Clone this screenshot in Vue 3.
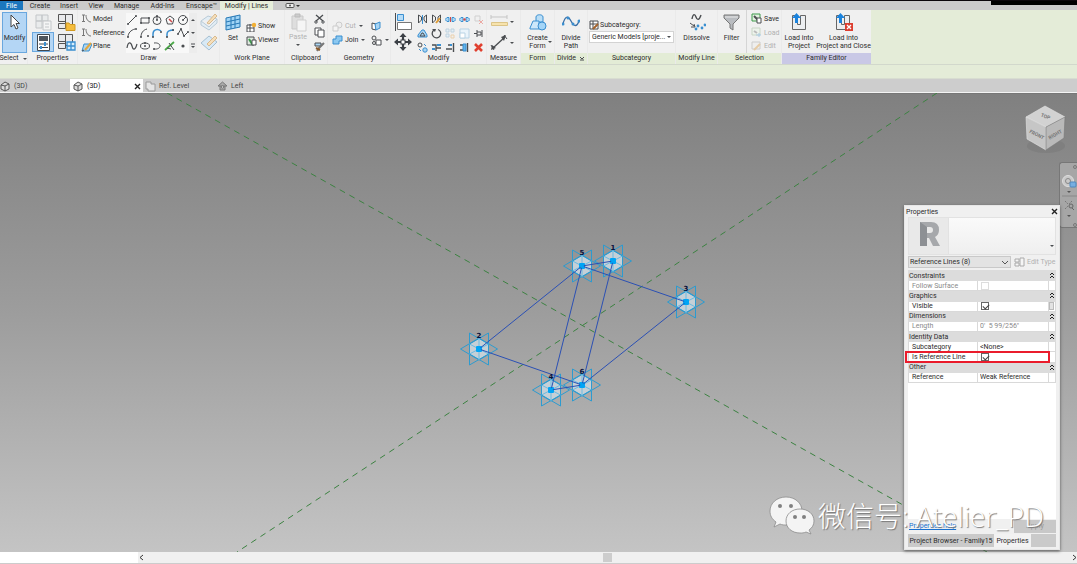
<script setup>
import { h } from 'vue'

const K = '#4a4d50'
const B = '#3a8fd0'
const L = '#a9d5f3'
const line = (d, s = K, w = 1, f = 'none') =>
  `<path d="${d}" stroke="${s}" stroke-width="${w}" fill="${f}"/>`
const dot = (x, y, r, f = K) => `<circle cx="${x}" cy="${y}" r="${r}" fill="${f}"/>`
const ring = (x, y, r, s = K, f = 'none') =>
  `<circle cx="${x}" cy="${y}" r="${r}" fill="${f}" stroke="${s}"/>`

const icons = {
  cursor: line('M5 2V14L8 11.5L10 16L12 15L10 10.5H13.5Z', '#444', 1, '#fff'),
  typeprops: line('M2 2H8V8H2ZM8 2H14V8H8ZM2 8H8V15H2Z', '#c3c6c9', 1, '#e9ebec') + line('M9 8H17V17H9Z', '#c3c6c9', 1, '#f4f5f5') + line('M11 11H15M11 14H15', '#c3c6c9'),
  props: line('M3.500 1.500H15.500V17.500H3.500Z', '#42484f', 1, '#fff') + line('M5 3H14V8H5Z', 'none', 0, '#4d545c') + line('M5 11H14M5 14.500H14', '#42484f') + line('M11 9V13M7 13V16', B, 2),
  famcat: line('M1.500 1.500H8.500V8.500H1.500ZM8.500 1.500H15.500V12.500H8.500ZM1.500 10.500H8.500V15.500H1.500Z', '#555', 1, '#e9eaec') + line('M9 10H12L13 11.500H18V17.500H9Z', '#d19a22', 1, '#f5bd3d'),
  famtypes: line('M1.500 1.500H8.500V8.500H1.500ZM8.500 1.500H15.500V12.500H8.500ZM1.500 10.500H8.500V15.500H1.500Z', '#555', 1, '#e9eaec') + line('M10 9H18V17H10ZM14 9V17M10 13H18', B, 1.3, '#d7edfb'),
  model: line('M1 2H4M2.500 2V8M1 8.500H4', '#777') + line('M5 2C5 6 7 9 10 9', '#777'),
  plane: line('M3 3H11L8 10H1Z', B, 1, L) + line('M4 9L10 2', '#e3a73d', 2) + line('M1 10L3 9', K),
  ln: line('M2 10L10 2') + dot(2, 10, 1) + dot(10, 2, 1),
  rect: line('M2 4H10V9H2Z') + dot(2, 9, 1) + dot(10, 4, 1),
  poly1: ring(6, 6.5, 4) + line('M6 2V6', K) + dot(6, 6, 1) + dot(6, 2, 1),
  poly2: line('M6 2L10 5L8.5 10H3.5L2 5Z') + line('M5 5L8 8', '#d04848', 1.5),
  circle: ring(6, 6, 4.5) + line('M6 6L9 3') + dot(6, 6, 1),
  arc1: line('M2 10C2 6 5 3 9 2') + dot(2, 10, 1) + dot(10, 2, 1),
  arc2: line('M2 10C2 6 4 3 8 2') + dot(2, 10, 1) + dot(9, 9, 1),
  arc3: line('M2 10V7C2 3 6 1 10 4', B, 1.5) + dot(2, 10, 1) + dot(10, 5, 1),
  arc4: line('M3 10V7C3 4 6 3 10 3', B, 1.5) + dot(3, 10, 1) + dot(9, 3, 1),
  spline: line('M1 7L4 2L7 9L11 5') + dot(1, 7, 1) + dot(4, 2, 1) + dot(7, 9, 1) + dot(11, 5, 1),
  wave: line('M1 8C2 1 5 2 6 6S9 11 11 4', K, 1.2),
  ellipse: '<ellipse cx="6" cy="6" rx="4.5" ry="3" fill="none" stroke="#4a4d50"/>' + dot(6, 6, 1) + dot(6, 3, 1),
  halfell: line('M3 3C11 2 11 10 3 9') + dot(3, 9, 1),
  pick: line('M1 10L10 2', '#4bab48', 1.8) + line('M5 3L10 10M3 8L7 9', K),
  point: dot(6, 6, 1.6),
  up: line('M1 4L3 2L5 4Z', 'none', 0, K),
  down: line('M1 2H5L3 4Z', 'none', 0, K),
  more: line('M1 1H5', K) + line('M1 3H5L3 5Z', 'none', 0, K),
  face: line('M1 9L8 4L17 7L9 15ZM1 9V13L9 18L17 11V7', '#b9cbd8', 1, '#e3edf4') + line('M7 11L15 2L17 4L9 12Z', '#d9b98c', 1, '#f5dfbb'),
  wplane: line('M1 10L9 3L17 9L9 17Z', '#a5bfd2', 1, '#d8e9f5') + line('M7 11L15 3L17 5L9 13Z', '#d9b98c', 1, '#f5dfbb'),
  set: line('M2 5L16 2V14L2 17ZM7 4V16M11 3V15M2 9L16 6M2 13L16 10', '#2778b5', 1, '#9fd3f5'),
  show: line('M1 4H8V11H1ZM4 3V11M1 7H8', K, 1, '#fff') + dot(8, 4, 2.2, '#f2b035'),
  viewer: line('M1 2H8V10H1Z', K, 1, '#dfe9df') + line('M3 4L6 9L9 6', '#3f9a4d', 2) + line('M6 5H10V10H6Z', K, 1, '#fff'),
  paste: line('M3 3H14V16H3Z', '#c9c9c9', 1, '#dedede') + line('M6 1H11V4H6Z', '#bbb', 1, '#ccc') + line('M8 7H17V18H8Z', '#cfcfcf', 1, '#f5f5f5'),
  cut: line('M2 2L9 8M9 2L2 8', K, 1.3) + ring(2, 9, 1.2) + ring(9, 9, 1.2),
  copy: line('M1 1H7V8H1Z', K, 1, '#fff') + line('M4 3H10V10H4Z', K, 1, '#fff'),
  match: line('M1 2H7V5H1Z', K, 1, L) + line('M10 2L5 7L3 10', '#777', 2) + line('M2 7L6 9', '#8a5a2b', 2),
  gcut: ring(7, 4, 3, '#ccc', '#eee') + line('M1 5H6V10H1Z', '#ccc', 1, '#f4f4f4'),
  gjoin: line('M4 1H10V6H7V9H1V4H4Z', B, 1, '#8cc8f0'),
  gface: line('M1 2L5 3V9L1 8Z', K, 1, '#fff') + line('M4 3L9 1V7L5 9Z', B, 1, L),
  gdem: ring(3, 3, 2) + line('M5 5H10V10H5Z', K, 1, '#fff') + ring(3, 8, 1.5),
  align: line('M1.5 1V19', K) + line('M3.500 2.500H9.500V8.500H3.500Z', B, 1, '#b6dcf7') + line('M3.500 10.500H17.500V17.500H3.500Z', '#777', 1, '#fff'),
  move: line('M9 3V15M3 9H15', '#3b3f45', 2.2) + line('M9 0L12.500 4H5.500ZM9 18L12.500 14H5.500ZM0 9L4 5.500V12.500ZM18 9L14 5.500V12.500Z', 'none', 0, '#3b3f45') + '<rect x="7" y="7" width="4" height="4" fill="#fff" stroke="#3b3f45"/>',
  mirror1: line('M1.500 1V9L4.500 6V3ZM9.500 1V9L7 6V3Z', K, 1) + line('M5.5 1V10', B),
  mirror2: line('M1.500 1V9L4.500 6V3ZM9.500 1V9L7 6V3Z', K, 1) + line('M5 9L9 4', '#df9d37', 2),
  split1: line('M0 5.500L2 3.500H4V7.500H2ZM7 3.500H9L11 5.500L9 7.500H7Z', B, 1, L) + line('M5.5 3V8', '#d04848'),
  split2: line('M0 5.500L2 3.500H4V7.500H2ZM7 3.500H9L11 5.500L9 7.500H7Z', B, 1, L) + dot(5.5, 5.5, 1.2, '#d04848'),
  unpin: line('M2 2H7V7H2Z', '#d0d0d0') + line('M6 6L10 10M10 6L6 10', '#eba9a3'),
  offset: line('M1 9V7L5 2H7L10 7V9Z', B, 1, L) + line('M3 8L5 5H6L8 8Z', K),
  rotate: line('M3 2A4.300 4.300 0 1 0 7 1.500', K, 1.3) + line('M1 1L5 1L4 4Z', 'none', 0, K),
  array: line('M1 1H4V4H1ZM6 1H9V4H6ZM1 6H4V9H1Z', '#bfd2df', 1, '#e5eff5') + line('M6 7H9V10H6Z', '#ead0ac'),
  scale: line('M1 1H10V10H1Z', '#b9d3e4', 1, '#eaf4fb') + line('M1 5H6V10H1Z', '#b9d3e4', 1, '#fff'),
  pin: line('M1 5.500H4M4 2V9M4 4H8V7H4M9 2V9', K),
  trim0: ring(3, 3, 2) + ring(8, 8, 2.2, B, L) + line('M7 2L9 4M2 7L4 9', B),
  trim1: line('M1 3H5V9M5 6H10', K, 1.3) + line('M6 3H10M1 7H4', B, 2),
  trim2: line('M1 7H7M3 3H7M8.500 1V10', K, 1.4) + line('M5 3H7', B, 2),
  trim3: line('M1 3H6M1 8H6M8.500 1V10', K, 1.4) + line('M4 2H7V9H4Z', B, 1, '#5fb2ea'),
  del: line('M2 2L9 9M9 2L2 9', '#e0402f', 2.6),
  ruler: line('M1 5H17M1 3V7M17 3V7', '#c5c5c5') + line('M1.500 10.500H17.500V13.500H1.500Z', '#dcc487', 1, '#f7e3ad'),
  dim: line('M3 15L15 4', K, 1.3) + line('M1 12L4 17M14 2L17 6', K) + line('M1 17L2 12L6 15ZM16 2L11 4L14 8Z', 'none', 0, K),
  form: line('M7 4C7 1 14 1 14 4V9H7Z', B, 1, '#b9def7') + line('M1 15L4 8H10V16H1Z', B, 1, '#cde8fa') + ring(13, 13, 4, B, '#a4d5f7'),
  dpath: line('M1 11C3 3 6 2 9 8S15 14 17 8', '#3a6ea5', 1.3) + dot(1, 11, 1.5, B) + dot(6, 5, 1.5, B) + dot(11, 11, 1.5, B) + dot(17, 8, 1.5, B),
  subcat: line('M1 1H9V9H1ZM4 1V9M1 4H9', K, 1, '#fff') + line('M4 9L9 4', '#a3632c', 2),
  dissolve: line('M4 6C5 0 7 1 8 4S11 8 13 2', K, 1.4) + line('M2 10L6 13M3 14L7 14L6 11', K) + [[8, 16], [10, 13], [14, 15], [17, 12]].map((p) => dot(p[0], p[1], 1.4, B)).join(''),
  filter: line('M1 2H16V5L10 11V17L7 15V11L1 5Z', '#777', 1, '#b9bcc0') + line('M2 4H15', '#e8e8e8'),
  save: line('M1 1H9V8H1Z', '#3f9a4d', 1, '#e3f2e0') + line('M3 3L7 7', K, 2) + line('M6 5H10V10H6Z', K, 1, '#fff'),
  load: line('M1 1H9V8H1Z', '#c9d6c6', 1, '#edf3ec') + line('M3 4L6 6', '#bbb', 2) + line('M5 8H10M8 6V10', '#aacbe4'),
  edit: line('M1 1H9V8H1Z', '#ccc', 1, '#eee') + line('M3 9L9 3', '#e6cba6', 2),
  loadp: line('M2.500 2.500H7.500V11.500H10.500V2.500H15.500V16.500H2.500Z', '#666', 1, '#eceef0') + line('M6.500 10V4', '#1b83dd', 3) + line('M6.500 0L11 5H2Z', 'none', 0, '#1b83dd'),
  loadc: line('M2.500 2.500H7.500V11.500H10.500V2.500H15.500V16.500H2.500Z', '#666', 1, '#eceef0') + line('M6.500 10V4', '#1b83dd', 3) + line('M6.500 0L11 5H2Z', 'none', 0, '#1b83dd') + '<rect x="11" y="10" width="8" height="8" fill="#dc3f30"/>' + line('M13 12L17 16M17 12L13 16', '#fff', 1.3),
  house: line('M1 4L5 1L9 3V8L5 10L1 8ZM1 4L5 5L9 3M5 5V10', '#555', 1, '#ddd'),
  plan: line('M1 1H6V3H10V10H3V8H1Z', '#9a9a9a', 1, '#e5e5e5'),
  elev: line('M1 5L5.500 1L10 5ZM3 5V9H8V5', '#777', 1, '#aaa') + ring(5.500, 6, 1.2, '#777', '#ddd'),
  close: line('M1 1L6 6M6 1L1 6', '#222', 1.4),
  etype: line('M1 2H5V5H1ZM6 1H10V9H6ZM1 6H5V9H1Z', '#aaa', 1, '#f5f5f5'),
  chev: line('M1 1L4 4L7 1', '#555'),
  dbl: line('M1 3L3 1L5 3M1 6L3 4L5 6', '#222'),
  pop: line('M1 1L3 3L5 1M1 4H5', K)
}
const Ico = ({ n, w = 11, hh }) =>
  h('svg', {
    width: w, height: hh || w, viewBox: `0 0 ${w} ${hh || w}`, 'aria-hidden': 'true',
    style: { display: 'block', flexShrink: 0 }, innerHTML: icons[n]
  })
Ico.props = ['n', 'w', 'hh']

const menu = ['Create', 'Insert', 'View', 'Manage', 'Add-Ins', 'Enscape™']
const drawTools = ['ln', 'rect', 'poly1', 'poly2', 'circle', 'arc1', 'arc2', 'arc3', 'arc4', 'spline', 'wave', 'ellipse', 'halfell', 'pick', 'point']
const modTools = ['mirror1', 'mirror2', 'split1', 'split2', 'unpin', 'offset', 'rotate', 'array', 'scale', 'pin', 'trim0', 'trim1', 'trim2', 'trim3', 'del']
const nodes = [[613, 261, 1], [479, 349, 2], [686, 302, 3], [551, 390, 4], [582, 266, 5], [582, 385, 6]]
const edges = [[5, 2], [5, 3], [5, 4], [5, 1], [1, 6], [3, 6], [2, 6], [4, 6]]
const at = (i) => nodes[i - 1]
const rows = [
  { head: 'Constraints' }, { label: 'Follow Surface', check: false, dim: true },
  { head: 'Graphics' }, { label: 'Visible', check: true, btn: true },
  { head: 'Dimensions' }, { label: 'Length', value: '0\'  5 99/256"', dim: true },
  { head: 'Identity Data' }, { label: 'Subcategory', value: '<None>' },
  { label: 'Is Reference Line', check: true, mark: true },
  { head: 'Other' }, { label: 'Reference', value: 'Weak Reference' }
]
</script>

<template>
  <div class="app">
    <nav class="menubar">
      <button class="file">File</button>
      <button v-for="m in menu" :key="m" :class="'m-' + m.slice(0, 3).toLowerCase()">{{ m }}</button>
      <button class="current">Modify | Lines</button>
      <button class="cycle" aria-label="Minimize ribbon">
        <svg width="16" height="7" viewBox="0 0 16 7"><rect x="1" y="1.500" width="8" height="4" rx="1" fill="#eee" stroke="#555" /><circle cx="5" cy="3.500" r="1" fill="#555" /><path d="M11 3H15L13 5Z" fill="#333" /></svg>
      </button>
      <span class="black"></span>
    </nav>

    <div class="ribbon">
      <section class="panel p-select">
        <div class="body"><button class="big on"><Ico n="cursor" :w="18" :hh="19" />Modify</button></div>
        <h2>Select <Ico n="down" :w="6" /></h2>
      </section>
      <section class="panel p-props">
        <div class="body quad">
          <button aria-label="Type properties"><Ico n="typeprops" :w="19" /></button>
          <button aria-label="Family category"><Ico n="famcat" :w="19" /></button>
          <button aria-label="Properties" class="on"><Ico n="props" :w="19" /></button>
          <button aria-label="Family types"><Ico n="famtypes" :w="19" /></button>
        </div>
        <h2>Properties</h2>
      </section>
      <section class="panel p-draw">
        <div class="body">
          <div class="stack names">
            <button><Ico n="model" />Model</button>
            <button><Ico n="model" />Reference</button>
            <button><Ico n="plane" />Plane</button>
          </div>
          <div class="gallery">
            <div class="tools"><button v-for="t in drawTools" :key="t" :aria-label="t"><Ico :n="t" :w="12" /></button></div>
            <div class="scroller">
              <button aria-label="Up"><Ico n="up" :w="6" /></button>
              <button aria-label="Down"><Ico n="down" :w="6" /></button>
              <button aria-label="More"><Ico n="more" :w="6" /></button>
            </div>
          </div>
          <div class="pair">
            <button aria-label="Draw on face"><Ico n="face" :w="19" /></button>
            <button aria-label="Draw on work plane"><Ico n="wplane" :w="19" /></button>
          </div>
        </div>
        <h2>Draw</h2>
      </section>
      <section class="panel p-work">
        <div class="body">
          <button class="big"><Ico n="set" :w="18" :hh="19" />Set</button>
          <div class="stack two"><button><Ico n="show" />Show</button><button><Ico n="viewer" />Viewer</button></div>
        </div>
        <h2>Work Plane</h2>
      </section>
      <section class="panel p-clip">
        <div class="body">
          <button class="big off"><Ico n="paste" :w="18" :hh="19" />Paste<Ico n="down" :w="6" /></button>
          <div class="stack">
            <button aria-label="Cut"><Ico n="cut" /></button>
            <button aria-label="Copy"><Ico n="copy" /></button>
            <button aria-label="Match"><Ico n="match" /></button>
          </div>
        </div>
        <h2>Clipboard</h2>
      </section>
      <section class="panel p-geo">
        <div class="body">
          <div class="stack two joins"><button class="off"><Ico n="gcut" />Cut<Ico n="down" :w="6" /></button><button><Ico n="gjoin" />Join<Ico n="down" :w="6" /></button></div>
          <div class="stack two"><button aria-label="Split face"><Ico n="gface" /></button><button aria-label="Demolish"><Ico n="gdem" /><Ico n="down" :w="6" /></button></div>
        </div>
        <h2>Geometry</h2>
      </section>
      <section class="panel p-mod">
        <div class="body">
          <div class="pair"><button aria-label="Align"><Ico n="align" :w="19" /></button><button aria-label="Move"><Ico n="move" :w="19" /></button></div>
          <div class="tools"><button v-for="t in modTools" :key="t" :aria-label="t"><Ico :n="t" /></button></div>
        </div>
        <h2>Modify</h2>
      </section>
      <section class="panel p-meas">
        <div class="body">
          <div class="pair">
            <button aria-label="Measure"><Ico n="ruler" :w="19" /><Ico n="down" :w="6" /></button>
            <button aria-label="Dimension"><Ico n="dim" :w="19" /><Ico n="down" :w="6" /></button>
          </div>
        </div>
        <h2>Measure</h2>
      </section>
      <section class="panel ctx p-form">
        <div class="body"><button class="big"><Ico n="form" :w="18" :hh="19" /><span>Create<br />Form</span></button><Ico class="corner" n="down" :w="6" /></div>
        <h2>Form</h2>
      </section>
      <section class="panel ctx p-div">
        <div class="body"><button class="big"><Ico n="dpath" :w="18" :hh="19" /><span>Divide<br />Path</span></button></div>
        <h2>Divide <Ico n="pop" :w="6" /></h2>
      </section>
      <section class="panel ctx p-sub">
        <div class="body">
          <label for="subcat"><Ico n="subcat" />Subcategory:</label>
          <div class="drop"><select id="subcat"><option>Generic Models [proje...</option></select><Ico n="down" :w="6" /></div>
        </div>
        <h2>Subcategory</h2>
      </section>
      <section class="panel ctx p-line">
        <div class="body"><button class="big"><Ico n="dissolve" :w="18" :hh="19" />Dissolve</button></div>
        <h2>Modify Line</h2>
      </section>
      <section class="panel ctx p-sel">
        <div class="body">
          <button class="big"><Ico n="filter" :w="18" :hh="19" />Filter</button>
          <div class="stack ruled"><button><Ico n="save" />Save</button><button class="off"><Ico n="load" />Load</button><button class="off"><Ico n="edit" />Edit</button></div>
        </div>
        <h2>Selection</h2>
      </section>
      <section class="panel ctx p-fam">
        <div class="body">
          <button class="big"><Ico n="loadp" :w="18" :hh="19" /><span>Load into<br />Project</span></button>
          <button class="big"><Ico n="loadc" :w="19" /><span>Load into<br />Project and Close</span></button>
        </div>
        <h2>Family Editor</h2>
      </section>
    </div>
    <div class="options"></div>

    <div class="views">
      <button class="v1"><Ico n="house" />(3D)</button>
      <button class="v2"><Ico n="house" />(3D)<Ico class="x" n="close" :w="7" /></button>
      <button class="v3"><Ico n="plan" />Ref. Level</button>
      <button class="v4"><Ico n="elev" />Left</button>
    </div>

    <main class="canvas">
      <svg class="scene" viewBox="0 93 1077 459" preserveAspectRatio="xMidYMid slice">
        <g stroke="#3c8241" stroke-width="1" stroke-dasharray="6 5" fill="none">
          <path d="M167 93L987 552" />
          <path d="M937 93L237 552" />
        </g>
        <g v-for="n in nodes" :key="n[2]" :transform="`translate(${n[0]} ${n[1]})`" stroke="#2c9bd0" fill="none">
          <path d="M0 -11L9.500 -5V5L0 11L-9.500 5V-5Z" fill="#c5d0d7" stroke="none" />
          <path d="M-9.500 -16L9.500 -5V16L-9.500 5ZM9.500 -16L-9.500 -5V16L9.500 5ZM-18.500 0L0 -11L18.500 0L0 11Z" />
          <path d="M0 -11V11M-9.500 -5L9.500 5M-9.500 5L9.500 -5" stroke="#6bbbe2" />
          <rect x="-3" y="-3" width="6" height="6" rx="1" fill="#00a5f5" stroke="none" />
        </g>
        <path v-for="e in edges" :key="e.join()" :d="`M${at(e[0])[0]} ${at(e[0])[1]}L${at(e[1])[0]} ${at(e[1])[1]}`" stroke="#2b50b4" stroke-width="1" />
        <circle v-for="n in nodes" :key="'c' + n[2]" :cx="n[0]" :cy="n[1]" r="2" fill="#00a5f5" />
        <text v-for="n in nodes" :key="'t' + n[2]" :x="n[0]" :y="n[1] - 11" class="num">{{ n[2] }}</text>
      </svg>

      <svg class="cube" width="52" height="56" viewBox="1020 102 52 56">
        <ellipse cx="1046" cy="146" rx="19" ry="7" fill="#777" opacity=".5" />
        <path d="M1026 117L1045 106L1065 117L1046 127Z" fill="#d2d2d2" stroke="#e4e4e4" stroke-width=".6" />
        <path d="M1026 117L1046 127V150L1027 139Z" fill="#c6c6c6" stroke="#e4e4e4" stroke-width=".6" />
        <path d="M1046 127L1065 117L1064 138L1046 150Z" fill="#b9b9b9" stroke="#777" stroke-width=".6" />
        <text transform="translate(1045 118) rotate(20)">TOP</text>
        <text transform="translate(1036 136) rotate(27)">FRONT</text>
        <text transform="translate(1056 136) rotate(-30)">RIGHT</text>
      </svg>

      <div class="navbar">
        <svg width="18" height="66" viewBox="0 0 18 66" fill="none">
          <circle cx="15" cy="4" r="1.500" stroke="#777" />
          <circle cx="8" cy="18" r="5.500" fill="#c9c9c9" stroke="#ddd" /><circle cx="8" cy="18" r="2.500" stroke="#888" />
          <rect x="10" y="19" width="6" height="5" rx="1" fill="#76aee0" stroke="#4d87bd" />
          <path d="M7 28H11L9 30Z" fill="#555" /><path d="M2 33H18" stroke="#888" />
          <path d="M5 38L8 41M12 38L9 41M5 46L8 43" stroke="#777" stroke-dasharray="2 1" /><circle cx="11" cy="43" r="2" stroke="#666" /><path d="M12 45L14 47" stroke="#666" />
          <path d="M7 52H11L9 54Z" fill="#555" /><circle cx="15" cy="62" r="1.500" stroke="#777" />
        </svg>
      </div>

      <aside class="palette">
        <header>Properties<button aria-label="Close"><Ico n="close" :w="7" /></button></header>
        <div class="preview">
          <div class="logo"><svg width="36" height="36" viewBox="0 0 36 36"><path d="M9 4H20Q28 4 28 12Q28 17 24 19L29 28H22L18 20H16V28H9ZM16 9V15H19Q22 15 22 12T19 9Z" fill="#a6a8ab" fill-rule="evenodd" /><path d="M9 4L16 9V28H9Z" fill="#8d9094" /></svg></div>
          <Ico n="down" :w="6" />
        </div>
        <div class="selector">
          <div class="drop"><select aria-label="Type"><option>Reference Lines (8)</option></select><Ico n="chev" :w="8" :hh="5" /></div>
          <button class="off"><Ico n="etype" />Edit Type</button>
        </div>
        <div class="sheet">
          <table>
            <colgroup><col /><col class="c2" /><col class="c3" /></colgroup>
            <tbody>
              <tr v-for="(r, i) in rows" :key="i" :class="{ head: r.head, dim: r.dim, mark: r.mark }">
                <template v-if="r.head"><th colspan="2">{{ r.head }}</th><td class="fold"><Ico n="dbl" :w="6" :hh="7" /></td></template>
                <template v-else>
                  <td><label :for="'f' + i">{{ r.label }}</label></td>
                  <td><input v-if="r.value" :id="'f' + i" type="text" :value="r.value" /><input v-else :id="'f' + i" type="checkbox" :checked="r.check" :disabled="r.dim" /></td>
                  <td><button v-if="r.btn" aria-label="Associate parameter"></button></td>
                </template>
              </tr>
            </tbody>
          </table>
        </div>
        <div class="foot"><a href="#help">Properties help</a><button>Apply</button></div>
        <div class="tabs"><button>Project Browser - Family15</button><button class="sel">Properties</button><span></span></div>
      </aside>

      <div class="watermark">
        <svg width="46" height="40" viewBox="0 0 46 40">
          <g fill="#f4f4f4" stroke="#8b8b8b" stroke-width=".8">
            <path d="M17 1C8 1 1 7 1 15C1 20 3 23 7 26L5 31L11 28C13 29 15 29 18 29C27 29 33 22 33 15C33 7 26 1 17 1Z" />
            <path d="M31 13C23 13 17 18 17 25C17 32 23 37 31 37C33 37 35 37 37 36L42 38L40 34C43 32 45 29 45 25C45 18 39 13 31 13Z" />
          </g>
          <g fill="#808080"><circle cx="11" cy="10" r="2" /><circle cx="22" cy="10" r="2" /><circle cx="26" cy="21" r="2" /><circle cx="35" cy="21" r="2" /></g>
        </svg>
        <span>微信号: Atelier_PD</span>
      </div>
    </main>

    <footer class="hbar">
      <div class="status"></div>
      <div class="track"><button aria-label="Scroll left"><svg width="5" height="7" viewBox="0 0 5 7"><path d="M4 1L1 3.500L4 6" stroke="#333" fill="none" /></svg></button><span class="thumb"></span><button aria-label="Scroll right"><svg width="5" height="7" viewBox="0 0 5 7"><path d="M1 1L4 3.500L1 6" stroke="#333" fill="none" /></svg></button></div>
    </footer>
  </div>
</template>

<style>
body { overflow: hidden; }
</style>
<style scoped>
* { box-sizing: border-box; }
.app { min-height: 100vh; display: flex; flex-direction: column; font: 7px/8px Roboto, "Open Sans", sans-serif; color: #2c2c2c; background: #cdcdcd; overflow: hidden; }
button, select, input { font: inherit; color: inherit; background: none; border: 0; padding: 0; margin: 0; border-radius: 0; white-space: nowrap; }
button { display: flex; align-items: center; justify-content: center; }
.off { color: #b0b0b0; }

.menubar { display: flex; height: 10px; background: #cbcbcb; border-top: 1px solid #0c070c; }
.menubar button { width: 34px; }
.menubar .file { width: 23px; background: #1c77be; color: #fff; }
.menubar .m-ins { width: 24px; }
.menubar .m-vie { width: 30px; }
.menubar .m-man { width: 31px; }
.menubar .m-add { width: 41px; }
.menubar .m-ens { width: 37px; }
.menubar .current { width: 53px; background: #e6eeda; }
.menubar .cycle { width: 40px; }
.black { width: 86px; height: 4px; margin-left: auto; background: #000; }

.ribbon { display: flex; height: 54px; background: #e4ecd8; }
.panel { flex: none; display: flex; flex-direction: column; background: #f0f0f0; border-right: 1px solid #eaeaea; }
.body { flex: 1; min-height: 0; display: flex; }
h2 { flex: none; margin: 0; height: 11px; font: inherit; line-height: 11px; display: flex; align-items: center; justify-content: center; gap: 3px; white-space: nowrap; }
.ctx h2 { background: #e3ecd6; }
.p-fam h2 { background: #c9c8e6; }
.big { flex-direction: column; justify-content: flex-start; height: 41px; padding-top: 3px; gap: 2px; text-align: center; flex: 1; min-width: 0; }
.p-select { width: 28px; }
.p-select .big { margin: 2px 0 0 2px; padding-top: 1px; }
.on { background: #b4d6f5; outline: 1px solid #6aa7de; outline-offset: -1px; }
.p-props { width: 50px; }
.quad { display: grid; grid-template-columns: 22px 22px; grid-template-rows: 20px 20px; padding: 2px 0 0 4px; gap: 0 1px; }
.p-draw { width: 142px; }
.stack { padding-top: 2px; display: flex; flex-direction: column; }
.stack button { height: 14px; justify-content: flex-start; gap: 2px; }
.stack.two { padding-top: 9px; }
.names { width: 48px; padding-left: 3px; }
.names button { gap: 1px; }
.gallery { width: 71px; height: 40px; margin-top: 3px; display: flex; background: #f8f8f8; }
.tools { flex: 1; display: grid; grid-template-columns: repeat(5, 1fr); grid-template-rows: repeat(3, 13px); }
.scroller { width: 8px; display: grid; grid-template-rows: repeat(3, 13px); background: #ececec; }
.pair { display: flex; flex-direction: column; padding: 1px 0 0 3px; }
.pair button { height: 21px; }
.p-work { width: 65px; }
.p-work .big, .p-clip .big { flex: none; width: 26px; }
.p-clip .big { gap: 1px; }
.p-work .stack button { gap: 1px; }
.p-clip { width: 43px; }
.p-clip .stack { padding-left: 3px; }
.p-geo { width: 63px; }
.p-geo .stack { padding-left: 4px; }
.joins { width: 41px; }
.p-mod { width: 96px; }
.p-mod .tools { grid-template-rows: repeat(3, 14px); padding: 2px 0 0 2px; }
.p-meas { width: 34px; }
.p-form { width: 34px; }
.p-form .body { position: relative; }
.corner { position: absolute; right: 1px; bottom: 8px; }
.p-div { width: 33px; }
.p-sub { width: 88px; }
.p-sub .body { flex-direction: column; padding: 9px 1px 0 1px; }
.p-sub label { display: flex; align-items: center; height: 12px; }
.drop { display: flex; align-items: center; position: relative; }
.drop select { appearance: none; width: 100%; height: 12px; padding-left: 2px; background: #fff; border: 1px solid #d3d3d3; }
.drop svg { position: absolute; right: 2px; pointer-events: none; }
.p-line { width: 42px; }
.p-sel { width: 64px; }
.p-sel .big { flex: none; width: 27px; }
.ruled { border-left: 1px solid #d5d5d5; padding-left: 4px; margin-left: 1px; }
.p-fam { width: 89px; border-right: 0; }
.p-fam .big:first-child { flex: none; width: 34px; }
.options { height: 15px; background: #e4ecd8; border-top: 1px solid #d2d8cc; border-bottom: 1px solid #d8ddd1; }

.views { display: flex; height: 14px; background: #cdcdcd; border-bottom: 1px solid #f4f4f4; color: #444; }
.views button { justify-content: flex-start; gap: 3px; padding-top: 1px; }
.v1 { width: 70px; }
.views .v2 { width: 73px; background: #fff; padding: 1px 2px 0 3px; color: #111; }
.v2 .x { margin-left: auto; }
.views .v3 { width: 74px; padding-left: 2px; }

.canvas { flex: 1; min-height: 0; position: relative; border-top: 1px solid #777; background: linear-gradient(#808080, #9d9d9d 48%, #c4c4c4); }
.scene { position: absolute; inset: 0; top: -1px; width: 100%; height: calc(100% + 1px); }
.num { font: bold 7px "DejaVu Sans", sans-serif; fill: #06103c; text-anchor: middle; }
.cube { position: absolute; right: 5px; top: 8px; }
.cube text { font: bold 5px Roboto, sans-serif; fill: #777; text-anchor: middle; }
.navbar { position: absolute; right: 0; top: 68px; width: 18px; height: 66px; background: #a6a6a6; border: 1px solid #777; border-right: 0; border-radius: 3px 0 0 3px; overflow: hidden; }

.palette { position: absolute; right: 17px; top: 111px; bottom: 2px; width: 156px; padding: 0 3px 2px; display: flex; flex-direction: column; background: #f0f0f0; border: 1px solid #e6e6e6; box-shadow: 0 1px 3px #555; }
.palette header { height: 11px; display: flex; align-items: center; justify-content: space-between; margin: 0 -2px; }
.preview { height: 38px; display: flex; align-items: center; justify-content: space-between; border: 1px solid #e2e2e2; background: linear-gradient(#fafafa, #efefef); }
.logo { width: 40px; height: 36px; display: flex; justify-content: center; border-right: 1px solid #e2e2e2; background: #e9e9e9; }
.preview > svg { margin-top: 20px; }
.selector { display: flex; height: 14px; align-items: center; gap: 3px; margin-bottom: 1px; }
.selector .drop { width: 103px; }
.selector select { background: #e3e3e3; border-color: #c9c9c9; padding-left: 1px; }
.selector button { gap: 2px; }
.sheet { flex: 1; background: #fff; }
table { width: 100%; height: 113px; border-collapse: collapse; table-layout: fixed; }
.c2 { width: 71px; }
.c3 { width: 7px; }
td, th { padding: 0; font: inherit; line-height: 8px; text-align: left; border: 1px solid #d9d9d9; }
td:first-child { padding-left: 3px; }
th { border-color: #dcdcdc; }
.head { background: #dcdcdc; }
.head .fold { border-color: #dcdcdc; padding: 0; }
.dim { color: #8a8a8a; }
td label { display: block; }
td input[type=text] { display: block; width: 68px; height: 8px; padding-left: 2px; white-space: pre; }
td input[type=checkbox] { appearance: none; display: block; width: 8px; height: 8px; margin-left: 3px; border: 1px solid #666; background: #fff; position: relative; }
td input[type=checkbox]:disabled { border-color: #ddd; }
td input[type=checkbox]:checked::after { content: ""; position: absolute; left: 1px; top: 1px; width: 5px; height: 3px; border: solid #444; border-width: 0 0 1px 1px; transform: rotate(-45deg); }
td button { width: 5px; height: 8px; background: #e3e3e3; border: 1px solid #bbb; }
.mark { position: relative; }
.mark td:first-child::before { content: ""; position: absolute; left: -4px; right: 6px; top: -1px; bottom: -1px; border: 2px solid #ea1c2c; pointer-events: none; }
.foot { height: 14px; display: flex; align-items: center; justify-content: space-between; padding-left: 1px; }
.foot a { color: #1a70cf; }
.foot button { width: 42px; height: 13px; background: #c8c8c8; color: #999; }
.tabs { display: flex; height: 13px; margin-top: 1px; }
.tabs button { background: #cacaca; width: 86px; }
.tabs .sel { background: #f2f2f2; width: 37px; }
.tabs span { flex: 1; background: #cacaca; }

.watermark { position: absolute; right: 33px; bottom: 16px; display: flex; align-items: center; gap: 3px; color: #fff; font: 300 28px/40px "Open Sans", "Noto Sans CJK SC", sans-serif; text-shadow: 1px 1px 1px #777; white-space: nowrap; pointer-events: none; }

.hbar { display: flex; height: 12px; background: #fff; border-bottom: 1px solid #ccc; }
.status { flex: 138 1 0; }
.track { flex: 939 1 0; display: flex; align-items: center; justify-content: space-between; padding: 0 0 0 1px; background: #f0f0f0; }
.thumb { width: 9px; height: 9px; background: #cdcdcd; }
</style>
